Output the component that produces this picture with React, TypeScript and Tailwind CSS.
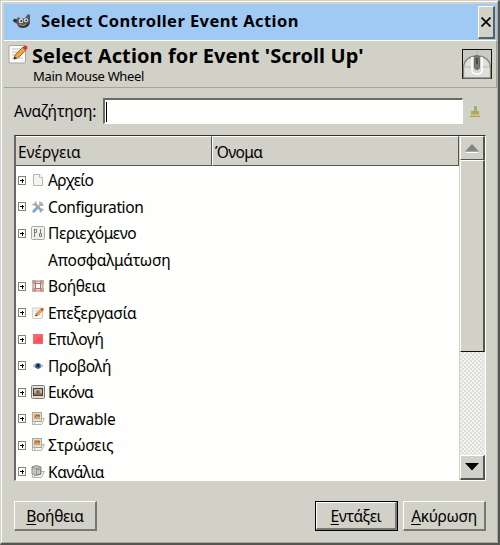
import React from "react";

const FONT = "font-['Noto_Sans','Open_Sans',sans-serif]";

function Wilber() {
  return (
    <svg width="19" height="16" viewBox="0 0 19 16">
      <path d="M1 5 L4 5 L5 3 L8 5 L12 4 L15 0 L17 1 L17 9 Q16 14 9 14 Q5 14 4 10 L1 8 Z" fill="#5b5a58" />
      <path d="M6 10 Q11 13 17 8 L15 12 Q10 15 6 12Z" fill="#343332" />
      <circle cx="8" cy="7" r="2.3" fill="#d8d8d6" />
      <circle cx="13" cy="6.3" r="2.1" fill="#e4e4e2" />
      <circle cx="8.4" cy="7" r="1" fill="#222" />
      <circle cx="13.2" cy="6.4" r=".9" fill="#222" />
      <ellipse cx="2" cy="6.5" rx="2" ry="1.7" fill="#343331" />
      <path d="M6 10.5q4 2 7 0" fill="none" stroke="#a9a8a6" />
    </svg>
  );
}

function EditIcon({ size }: { size: number }) {
  return (
    <svg width={size} height={size} viewBox="0 0 20 20">
      <rect x="1" y="1.5" width="16.5" height="17.5" rx="1" fill="#fafaf8" stroke="#a6a6a0" />
      <path d="M4 5h8M4 8h6M4 11h4M4 14h3M11 14h4" stroke="#c3c3c0" />
      <path d="M7 11 L15 3 L18 6 L10 14 L6 15Z" fill="#eea541" stroke="#9b6427" strokeWidth=".9" />
      <path d="M14.5 4 L16 1.7 Q20 1 19.3 4.5 L17.5 6.5Z" fill="#d83a34" />
      <path d="M5.6 15.4l1-2.8 2 1.7z" fill="#222" />
    </svg>
  );
}

function MouseIcon() {
  return (
    <svg width="30" height="30" viewBox="0 0 30 30">
      <rect x=".5" y=".5" width="29" height="29" fill="#cbcac2" stroke="#111" />
      <path d="M14.5 6q0-2 1.5-4" fill="none" stroke="#b5b5b0" />
      <path d="M1.5 29V18Q3 7 15 7Q27 7 28.5 18V29Z" fill="#dfe0dc" stroke="#85867f" strokeWidth="1.3" />
      <path d="M2 18H10M20 18H28" stroke="#b4b5b0" />
      <path d="M10 8V21Q10 25 15 25Q20 25 20 21V8" fill="#d7d8d5" stroke="#fff" strokeWidth="1.6" />
      <rect x="12.5" y="6.5" width="5" height="14" rx="2.5" fill="#777977" stroke="#6a6b69" />
      <path d="M15 9v6" stroke="#3e3f3e" strokeWidth="1.6" />
    </svg>
  );
}

function Broom() {
  return (
    <svg width="11" height="13" viewBox="0 0 11 13" shapeRendering="crispEdges">
      <path d="M4 1h3v5h2v2H1V6h3z" fill="#9fb06b" />
      <path d="M1 8h8l1 4H0z" fill="#d5c45f" />
      <path d="M1 8.5h8M0 11.5h10" stroke="#aaa06b" />
    </svg>
  );
}

type IconName = "file" | "tools" | "context" | "help" | "edit" | "select" | "view" | "image" | "layers" | "channels";

function RowIcon({ name }: { name: IconName }) {
  if (name === "edit") return <EditIcon size={12} />;
  return (
    <svg width="14" height="14" viewBox="0 0 14 14">
      {name === "file" && (
        <>
          <path d="M2.5 1.5h6l3 3v8h-9z" fill="#f4f4f2" stroke="#b5b5b1" />
          <path d="M8.5 1.5v3h3" fill="#fff" stroke="#bdbdb9" />
        </>
      )}
      {name === "tools" && (
        <>
          <path d="M4 4L11 11" stroke="#999c9b" strokeWidth="2.4" />
          <path d="M1.5 4.5h3v-3M9.5 12.5v-3h3" fill="none" stroke="#a0a4a3" strokeWidth="1.5" />
          <path d="M9 1.5v3.5h3.5" fill="none" stroke="#a0a4a3" strokeWidth="1.3" />
          <path d="M11.5 2.5L6 8" stroke="#a5aaa9" strokeWidth="1.6" />
          <path d="M6.2 7.8L2.8 11.2" stroke="#7ba6d8" strokeWidth="3" strokeLinecap="round" />
        </>
      )}
      {name === "context" && (
        <>
          <rect x=".5" y=".5" width="13" height="13" rx="1" fill="#eeeeeb" stroke="#a8a8a4" />
          <path d="M3.5 3v8M3.5 3.5h2v3h-2M9.5 3v4M8.5 7.5h2v3h-2z" fill="none" stroke="#7c7c78" />
        </>
      )}
      {name === "help" && (
        <>
          <rect x="2" y="2" width="10" height="10" fill="#efcfc8" stroke="#9a9289" />
          <rect x="4.5" y="4.5" width="5" height="5" fill="#fff" stroke="#a9766b" />
          <path d="M3.5 3.5h1M9.5 3.5h1M3.5 10.5h1M9.5 10.5h1" stroke="#d94b43" strokeWidth="3" />
          <path d="M1.5 5V1.5H5M9 1.5h3.5V5M12.5 9v3.5H9M5 12.5H1.5V9" fill="none" stroke="#b3aca3" />
        </>
      )}
      {name === "select" && (
        <>
          <rect x="2" y="2" width="10" height="10" fill="#fb5155" />
          <path d="M3 3h8L3 11z" fill="#fd6163" />
          <rect x="2.5" y="2.5" width="9" height="9" fill="none" stroke="#e58d8e" strokeDasharray="1 1" />
        </>
      )}
      {name === "view" && (
        <>
          <path d="M2 7Q7 2 12 7Q7 11 2 7Z" fill="#e9edf1" stroke="#a5aaa9" />
          <circle cx="7" cy="7" r="2.8" fill="#315c9b" />
          <circle cx="7" cy="6.5" r="1.3" fill="#101e3b" />
        </>
      )}
      {name === "image" && (
        <>
          <rect x=".5" y=".5" width="13" height="13" rx="1" fill="#dddcd6" stroke="#7e7e7a" />
          <rect x="2.5" y="3.5" width="9" height="7" fill="#b7b2a4" stroke="#44423d" />
          <path d="M3 8h8v2H3z" fill="#ad6d3b" />
          <path d="M7 5v3M5 7h4" stroke="#51483f" />
        </>
      )}
      {(name === "layers" || name === "channels") && (
        <path d="M3 12.5L6 6.5H13.5L10.5 12.5ZM1.5 10V12.5H6" fill="#f4f4f1" stroke="#b5b4b0" />
      )}
      {name === "layers" && (
        <>
          <rect x="1.5" y=".5" width="9" height="9" fill="#dddcd8" stroke="#aaa9a5" />
          <rect x="3" y="2" width="6" height="5" fill="#d6a35c" />
          <path d="M4 5l2-2 1 1 1-1v2" fill="none" stroke="#946332" />
        </>
      )}
      {name === "channels" && (
        <>
          <path d="M1 2Q5 -1 10 2V9Q5 12 1 9Z" fill="#c4c5c2" stroke="#8b8c88" />
          <path d="M1 2q5 3 9 0M5.5 4.5h4v5h-4z" fill="none" stroke="#656662" strokeDasharray="1 1" />
        </>
      )}
    </svg>
  );
}

const rows: { label: string; icon?: IconName; spacing: string }[] = [
  { label: "Αρχείο", icon: "file", spacing: "tracking-[-0.7px]" },
  { label: "Configuration", icon: "tools", spacing: "tracking-[-0.4px]" },
  { label: "Περιεχόμενο", icon: "context", spacing: "tracking-[-0.35px]" },
  { label: "Αποσφαλμάτωση", spacing: "tracking-[-0.2px]" },
  { label: "Βοήθεια", icon: "help", spacing: "tracking-[-0.35px]" },
  { label: "Επεξεργασία", icon: "edit", spacing: "tracking-[-0.25px]" },
  { label: "Επιλογή", icon: "select", spacing: "tracking-[-0.4px]" },
  { label: "Προβολή", icon: "view", spacing: "tracking-[-0.45px]" },
  { label: "Εικόνα", icon: "image", spacing: "tracking-[-0.6px]" },
  { label: "Drawable", icon: "layers", spacing: "tracking-[-0.2px]" },
  { label: "Στρώσεις", icon: "layers", spacing: "tracking-[-0.2px]" },
  { label: "Κανάλια", icon: "channels", spacing: "tracking-[-0.45px]" },
];

function Expander() {
  return (
    <svg width="8" height="9" viewBox="0 0 8 9" shapeRendering="crispEdges">
      <rect x=".5" y=".5" width="7" height="8" fill="#fff" stroke="#85857f" />
      <path d="M2 4.5h4M4 3v4" stroke="#000" />
    </svg>
  );
}

function Button({ first, rest, primary }: { first: string; rest: string; primary?: boolean }) {
  return (
    <button className={`h-[30px] w-[83px] bg-[#d2d1c8] tracking-[-0.35px] ${primary ? "border border-black" : ""}`}>
      <span className="flex h-full w-full items-center justify-center border-t border-l border-r-2 border-b-2 border-t-white border-l-white border-r-[#777872] border-b-[#777872]">
        <span className="whitespace-nowrap">
          <span className="underline decoration-1 underline-offset-2">{first}</span>
          {rest}
        </span>
      </span>
    </button>
  );
}

export default function App() {
  return (
    <div className={`flex h-[545px] w-[500px] flex-col overflow-hidden border-t border-r-2 border-b-2 border-l border-t-[#d2d1c8] border-r-[#55574f] border-b-[#55574f] border-l-[#d2d1c8] bg-[#d2d1c8] text-[15.5px] leading-[20px] text-black ${FONT}`}>
      <div className="flex flex-1 flex-col border-t border-r border-l border-b border-t-white border-l-white border-r-[#aaa9a2] border-b-[#aaa9a2] pt-[2px] pl-[2px]">
        <header className="flex h-[36px] shrink-0 items-center bg-[#a0caf3] pr-[2px] pl-[9px]">
          <Wilber />
          <h1 className="ml-[9px] flex-1 pb-[2px] text-[16.5px] font-bold tracking-[0.43px] whitespace-nowrap">Select Controller Event Action</h1>
          <button className="flex h-[33px] w-[17px] items-center justify-center border-t border-r-2 border-b-2 border-l border-t-white border-l-white border-r-[#5d5f5b] border-b-[#5d5f5b] bg-[#d2d1c8]">
            <svg width="10" height="10" viewBox="0 0 10 10"><path d="M.5 .5L9.5 9.5M9.5 .5L.5 9.5" stroke="#000" strokeWidth="1.7" /></svg>
          </button>
        </header>
        <section className="flex h-[48px] shrink-0 border-t border-r border-b border-t-white border-r-[#a4a49e] border-b-[#a4a49e] pl-[4px]">
          <div className="mt-[3px]"><EditIcon size={20} /></div>
          <div className="ml-[4px] flex-1 whitespace-nowrap">
            <h2 className="mt-[2px] h-[26px] text-[20px] leading-[25px] font-bold tracking-[0.1px]">Select Action for Event 'Scroll Up'</h2>
            <p className="ml-px text-[13px] leading-[15px] tracking-[-0.35px]">Main Mouse Wheel</p>
          </div>
          <div className="mt-[8px] mr-[4px]"><MouseIcon /></div>
        </section>
        <div className="mt-[10px] flex h-[26px] shrink-0 items-center pl-[10px]">
          <label className="w-[89px] tracking-[-0.15px] whitespace-nowrap">Αναζήτηση:</label>
          <div className="flex h-[26px] w-[360px] items-center border-t-2 border-r border-b border-l-2 border-t-[#6a6b66] border-r-white border-b-white border-l-[#6a6b66] bg-[#fefefc]">
            <span className="ml-[1px] h-[20px] w-px bg-black" />
          </div>
          <div className="ml-[7px]"><Broom /></div>
        </div>
        <main className="mt-[11px] ml-[10px] flex h-[346px] w-[472px] shrink-0 border-t border-r border-b border-l-2 border-t-[#30322f] border-r-white border-b-white border-l-[#66676a] bg-[#fefefc]">
          <div className="flex min-w-0 flex-1 flex-col">
            <div className="flex h-[30px] shrink-0 bg-[#d2d1c8]">
              <div className="flex w-[196px] items-center border-t border-r border-b border-t-white border-r-[#55574f] border-b-[#55574f] pt-px pl-[2px]">Ενέργεια</div>
              <div className="flex flex-1 items-center border-t border-r border-b border-l border-t-white border-r-[#55574f] border-b-[#55574f] border-l-white pt-px pl-[2px] tracking-[-0.6px]">Όνομα</div>
            </div>
            <div className="min-h-0 flex-1 overflow-hidden pt-px">
              {rows.map((row) => (
                <div key={row.label} className="flex h-[26.5px] items-center pl-[2px]">
                  <div className="w-[8px]">{row.icon && <Expander />}</div>
                  <div className="ml-[5px] flex w-[14px] justify-center">{row.icon && <RowIcon name={row.icon} />}</div>
                  <span className={`ml-[3px] whitespace-nowrap ${row.spacing}`}>{row.label}</span>
                </div>
              ))}
            </div>
          </div>
          <aside className="flex w-[26px] shrink-0 flex-col border-l border-l-[#d2d1c8] bg-[#e8e8e3] bg-[repeating-conic-gradient(#deded9_0_25%,#f3f3f0_0_50%)] bg-[length:4px_4px]">
            <div className="flex h-[24px] shrink-0 items-center justify-center border-t border-r-2 border-b border-l border-t-white border-l-white border-r-[#55574f] border-b-[#55574f] bg-[#d2d1c8]">
              <svg width="14" height="9" viewBox="0 0 14 9"><path d="M1 8.5h12" stroke="#fff" /><path d="M0 7.5L7 0L14 7.5z" fill="#858681" /></svg>
            </div>
            <div className="h-[192px] shrink-0 border-t border-r-2 border-b border-l border-t-white border-l-white border-r-[#55574f] border-b-[#111] bg-[#d2d1c8]" />
            <div className="mt-auto flex h-[25px] shrink-0 items-center justify-center border-t border-r-2 border-b-2 border-l border-t-white border-l-white border-r-[#55574f] border-b-[#55574f] bg-[#d2d1c8]">
              <svg width="14" height="8" viewBox="0 0 14 8"><path d="M0 0h14L7 7.5z" fill="#000" /></svg>
            </div>
          </aside>
        </main>
        <footer className="mt-[20px] ml-[10px] flex w-[472px] shrink-0">
          <Button first="Β" rest="οήθεια" />
          <div className="ml-auto flex gap-[5px]">
            <Button first="Ε" rest="ντάξει" primary />
            <Button first="Α" rest="κύρωση" />
          </div>
        </footer>
      </div>
    </div>
  );
}
